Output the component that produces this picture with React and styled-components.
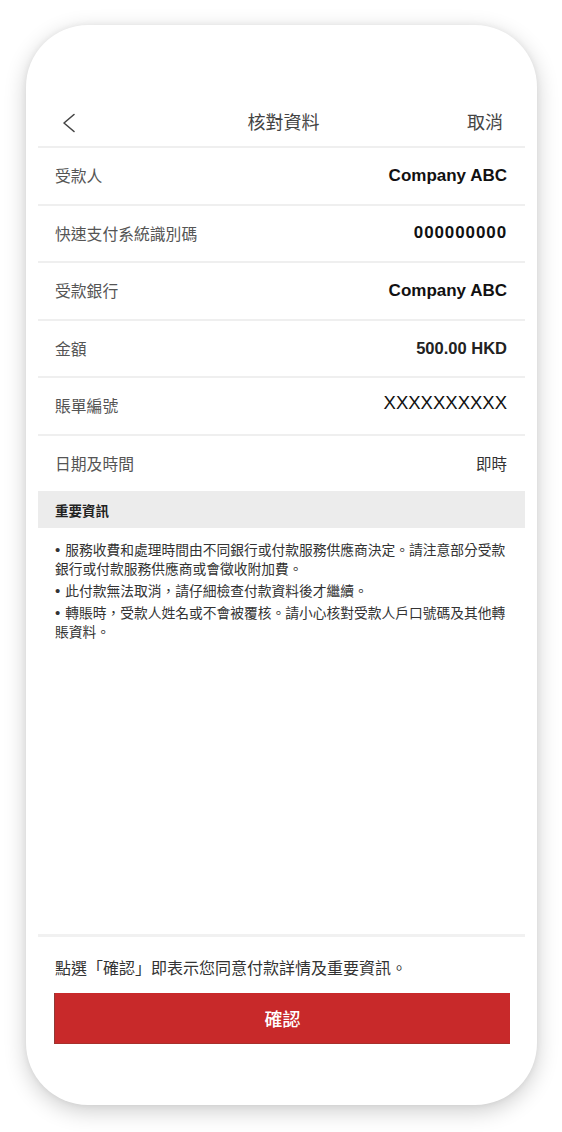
import React from "react";
import styled, { createGlobalStyle } from "styled-components";

const Global = createGlobalStyle`
  html, body { margin: 0; padding: 0; background: #ffffff; }
  body { font-family: "Noto Sans CJK TC", "Liberation Sans", sans-serif; }
  * { box-sizing: border-box; }
`;

const CJK = `"Noto Sans CJK TC", "Noto Sans CJK SC", sans-serif`;
const LATIN = `"Liberation Sans", Arial, "Noto Sans CJK TC", sans-serif`;

const Page = styled.div`
  width: 562px;
  height: 1132px;
  padding: 25px 25px 0 26px;
  overflow: hidden;
`;

const Phone = styled.div`
  width: 511px;
  height: 1080px;
  background: #ffffff;
  border-radius: 62px;
  box-shadow: 0 6px 22px rgba(0, 0, 0, 0.2), 0 0 6px rgba(0, 0, 0, 0.06);
  display: flex;
  flex-direction: column;
  padding: 70px 12px 0 12px;
`;

const Header = styled.div`
  height: 51px;
  display: grid;
  grid-template-columns: 1fr auto 1fr;
  align-items: center;
  padding: 0 22px 0 24px;
`;

const Back = styled.div`
  display: flex;
  align-items: center;
  height: 100%;
  padding-top: 4px;
`;

const Title = styled.div`
  font-family: ${CJK};
  font-size: 18px;
  color: #444;
  padding-left: 2px;
`;

const Cancel = styled.div`
  justify-self: end;
  font-family: ${CJK};
  font-size: 18px;
  color: #444;
`;

const Rows = styled.div`
  display: flex;
  flex-direction: column;
`;

const Row = styled.div`
  height: 57.5px;
  border-top: 2px solid #efefef;
  display: flex;
  align-items: center;
  justify-content: space-between;
  padding: 0 18px 0 17px;
`;

const Label = styled.div`
  font-family: ${CJK};
  font-size: 15.8px;
  color: #555;
`;

const Value = styled.div`
  font-family: ${LATIN};
  font-size: ${(p) => p.$size || 17}px;
  font-weight: ${(p) => (p.$bold ? 700 : 400)};
  letter-spacing: ${(p) => p.$ls || 0}px;
  color: ${(p) => p.$color || "#111"};
  margin-top: ${(p) => p.$dy || 0}px;
`;

const ValueCJK = styled.div`
  font-family: ${CJK};
  font-size: 15.5px;
  color: #333;
`;

const Band = styled.div`
  height: 37px;
  background: #ececec;
  display: flex;
  align-items: center;
  padding: 0 17px;
  font-family: ${CJK};
  font-size: 13.5px;
  font-weight: 700;
  color: #222;
`;

const Notes = styled.div`
  flex: 1;
  padding: 12px 14px 0 17px;
  display: flex;
  flex-direction: column;
  gap: 3px;
`;

const Note = styled.p`
  margin: 0;
  font-family: ${CJK};
  font-size: 13.75px;
  line-height: 19px;
  color: #333;
  white-space: nowrap;
`;

const Bullet = styled.span`
  font-family: ${LATIN};
  font-size: 15px;
  margin-right: 5px;
`;

const Footer = styled.div`
  border-top: 3px solid #f1f1f1;
  padding: 19px 15px 61px 16px;
  display: flex;
  flex-direction: column;
  gap: 15px;
`;

const Agree = styled.div`
  font-family: ${CJK};
  font-size: 16px;
  line-height: 22px;
  color: #333;
  padding-left: 1px;
`;

const ConfirmButton = styled.button`
  height: 51px;
  width: 100%;
  border: none;
  border-left: 1px solid #8f3a36;
  border-bottom: 1px solid #a8302c;
  background: #c8292a;
  color: #ffffff;
  font-family: ${CJK};
  font-size: 18px;
  font-weight: 500;
  display: flex;
  align-items: center;
  justify-content: center;
  padding: 0;
  cursor: pointer;
`;

const rows = [
  { label: "受款人", value: "Company ABC", bold: true, size: 17 },
  { label: "快速支付系統識別碼", value: "000000000", bold: true, size: 17, ls: 0.9 },
  { label: "受款銀行", value: "Company ABC", bold: true, size: 17 },
  { label: "金額", value: "500.00 HKD", bold: true, size: 16.5, color: "#222" },
  { label: "賬單編號", value: "XXXXXXXXXX", bold: false, size: 18.5, dy: -6 },
];

export default function App() {
  return (
    <>
      <Global />
      <Page>
        <Phone lang="zh-Hant-TW">
          <Header>
            <Back>
              <svg width="14" height="20" viewBox="0 0 14 20" fill="none">
                <polyline
                  points="12,1.5 2,10 12,18.5"
                  stroke="#444"
                  strokeWidth="1.6"
                  strokeLinecap="round"
                  strokeLinejoin="round"
                />
              </svg>
            </Back>
            <Title>核對資料</Title>
            <Cancel>取消</Cancel>
          </Header>
          <Rows>
            {rows.map((r) => (
              <Row key={r.label}>
                <Label>{r.label}</Label>
                <Value $bold={r.bold} $size={r.size} $ls={r.ls} $dy={r.dy} $color={r.color}>
                  {r.value}
                </Value>
              </Row>
            ))}
            <Row>
              <Label>日期及時間</Label>
              <ValueCJK>即時</ValueCJK>
            </Row>
          </Rows>
          <Band>重要資訊</Band>
          <Notes>
            <Note>
              <Bullet>•</Bullet>服務收費和處理時間由不同銀行或付款服務供應商決定。請注意部分受款
              <br />
              銀行或付款服務供應商或會徵收附加費。
            </Note>
            <Note>
              <Bullet>•</Bullet>此付款無法取消，請仔細檢查付款資料後才繼續。
            </Note>
            <Note>
              <Bullet>•</Bullet>轉賬時，受款人姓名或不會被覆核。請小心核對受款人戶口號碼及其他轉
              <br />
              賬資料。
            </Note>
          </Notes>
          <Footer>
            <Agree>點選「確認」即表示您同意付款詳情及重要資訊。</Agree>
            <ConfirmButton>確認</ConfirmButton>
          </Footer>
        </Phone>
      </Page>
    </>
  );
}
